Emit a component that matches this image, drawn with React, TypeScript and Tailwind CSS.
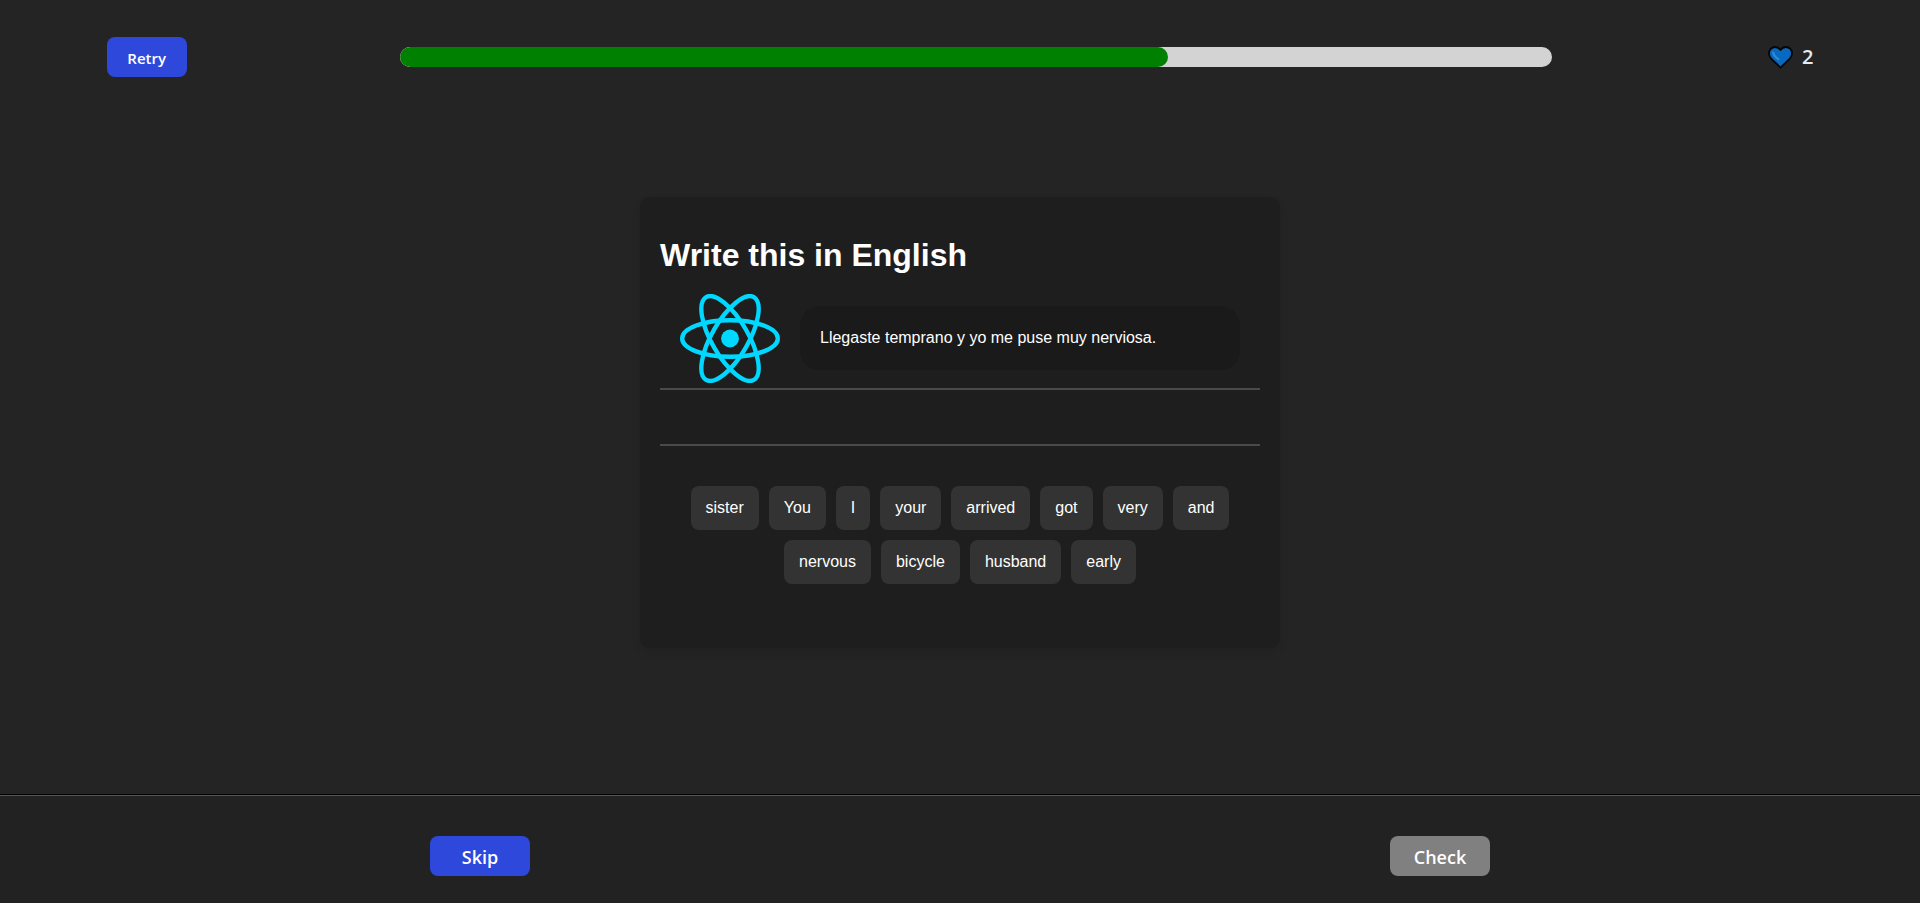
import React from "react";

const words = [
  "sister", "You", "I", "your", "arrived", "got",
  "very", "and", "nervous", "bicycle", "husband", "early",
];

const completed = 2;
const total = 3;

function AtomLogo() {
  return (
    <svg viewBox="-11.5 -10.23174 23 20.46348" className="w-[100px] shrink-0" role="img" aria-label="React">
      <circle r="2.05" fill="#00d8ff" />
      <g fill="none" stroke="#00d8ff" strokeWidth="1">
        <ellipse rx="11" ry="4.2" />
        <ellipse rx="11" ry="4.2" transform="rotate(60)" />
        <ellipse rx="11" ry="4.2" transform="rotate(120)" />
      </g>
    </svg>
  );
}

function Heart() {
  return (
    <svg viewBox="0 0 25 23" className="h-[23px] w-[25px] shrink-0" aria-hidden="true">
      <path
        d="M12.5 21.6 L3.2 12.6 C1.8 11.2 1 9.3 1 7.3 C1 3.8 3.7 1 7.1 1 C9.4 1 11.4 2.2 12.5 4 C13.6 2.2 15.6 1 17.9 1 C21.3 1 24 3.8 24 7.3 C24 9.3 23.2 11.2 21.8 12.6 Z"
        fill="#0669c2"
        stroke="#050505"
        strokeWidth="1.8"
        strokeLinejoin="round"
      />
      <path d="M5.2 6.4 C5.6 9.2 7.4 11.2 10.4 13.2" fill="none" stroke="#3a8bd0" strokeWidth="2" strokeLinecap="round" />
    </svg>
  );
}

export default function App() {
  return (
    <div className="flex min-h-screen flex-col bg-[#242424] font-['Liberation_Sans',Arial,sans-serif] text-base text-white">
      <header className="flex items-center justify-around pt-[37px]">
        <button className="h-10 w-20 rounded-lg bg-[#2e48dc] pt-0.5 font-['Open_Sans','Noto_Sans',sans-serif] text-[15px] font-semibold">
          Retry
        </button>
        <div
          role="progressbar"
          aria-label="Lesson progress"
          aria-valuenow={completed}
          aria-valuemax={total}
          className="h-5 w-3/5 overflow-hidden rounded-[10px] bg-[lightgray]"
        >
          <div className="h-full rounded-[10px] bg-[green]" style={{ width: `${(completed / total) * 100}%` }} />
        </div>
        <div className="flex w-12 items-center justify-end gap-[9px] font-['Open_Sans','Noto_Sans',sans-serif] text-xl font-semibold text-white/90">
          <Heart />
          <span>2</span>
        </div>
      </header>

      <main className="flex flex-1 items-start justify-center pt-[120px] pb-10">
        <section className="flex w-[640px] flex-col rounded-[10px] bg-[#1e1e1e] px-5 pt-[38px] pb-16 shadow-[0_4px_8px_rgba(0,0,0,0.1)]">
          <h1 className="text-[32px] leading-10 font-bold">Write this in English</h1>
          <div className="mt-[19px] flex items-center gap-5 px-5 pb-[5px]">
            <AtomLogo />
            <p className="flex-1 rounded-[20px] bg-[#1a1a1a] p-5 leading-6">Llegaste temprano y yo me puse muy nerviosa.</p>
          </div>
          <div className="h-[58px] border-y-2 border-[#4a4a4a]" aria-label="Your answer" />
          <div className="mt-10 flex flex-wrap justify-center gap-2.5 px-5">
            {words.map((word) => (
              <button key={word} className="rounded-lg bg-[#333333] px-[15px] py-2.5 leading-6">
                {word}
              </button>
            ))}
          </div>
        </section>
      </main>

      <footer className="border-t border-black bg-[#222222] font-['Open_Sans','Noto_Sans',sans-serif] text-lg font-semibold">
        <div className="flex justify-around border-t border-[#555555] pt-10 pb-[27px]">
          <button className="h-10 w-[100px] rounded-lg bg-[#2e48dc] pt-0.5">Skip</button>
          <button className="h-10 w-[100px] rounded-lg bg-[#808080] pt-0.5">Check</button>
        </div>
      </footer>
    </div>
  );
}
